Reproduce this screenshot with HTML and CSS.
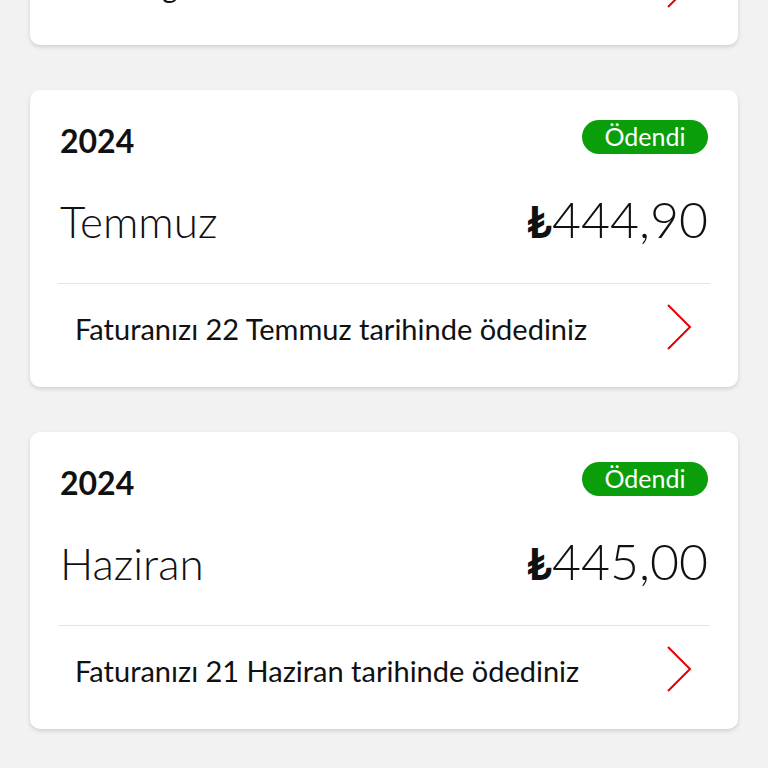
FILE: index.html
```html
<!DOCTYPE html>
<html lang="tr">
<head>
<meta charset="utf-8">
<link rel="stylesheet" href="styles.css">
</head>
<body>
<div class="list">
  <div class="card">
    <div class="head">
      <span class="year">2024</span>
      <span class="badge badge-wait">Ödenmedi</span>
    </div>
    <div class="main">
      <span class="month">Ağustos</span>
      <span class="amount"><span class="cur">₺</span>445,00</span>
    </div>
    <div class="foot">
      <span class="note">Fatura gecikmede</span>
      <svg class="chev" viewBox="0 0 26 46" width="26" height="46"><path d="M2 1 L24 23 L2 45" fill="none" stroke="#e60000" stroke-width="2"/></svg>
    </div>
  </div>
  <div class="card">
    <div class="head">
      <span class="year">2024</span>
      <span class="badge">Ödendi</span>
    </div>
    <div class="main">
      <span class="month">Temmuz</span>
      <span class="amount"><span class="cur">₺</span>444,90</span>
    </div>
    <div class="foot">
      <span class="note">Faturanızı 22 Temmuz tarihinde ödediniz</span>
      <svg class="chev" viewBox="0 0 26 46" width="26" height="46"><path d="M2 1 L24 23 L2 45" fill="none" stroke="#e60000" stroke-width="2"/></svg>
    </div>
  </div>
  <div class="card">
    <div class="head">
      <span class="year">2024</span>
      <span class="badge">Ödendi</span>
    </div>
    <div class="main">
      <span class="month">Haziran</span>
      <span class="amount"><span class="cur">₺</span>445,00</span>
    </div>
    <div class="foot">
      <span class="note">Faturanızı 21 Haziran tarihinde ödediniz</span>
      <svg class="chev" viewBox="0 0 26 46" width="26" height="46"><path d="M2 1 L24 23 L2 45" fill="none" stroke="#e60000" stroke-width="2"/></svg>
    </div>
  </div>
</div>
</body>
</html>
```
FILE: styles.css
```css
html, body {
  margin: 0;
  padding: 0;
  background: #f2f2f2;
  font-family: Lato, "Noto Sans", sans-serif;
  color: #111;
  overflow: hidden;
  height: 768px;
}
.list {
  display: flex;
  flex-direction: column;
  gap: 45px;
  padding: 0 30px;
  margin-top: -252px;
}
.card {
  background: #fff;
  border-radius: 10px;
  box-shadow: 0 2px 4px rgba(0,0,0,0.14);
  height: 297px;
  padding: 0 28px;
  display: flex;
  flex-direction: column;
  box-sizing: border-box;
}
.head {
  display: flex;
  justify-content: space-between;
  align-items: center;
  padding: 30px 2px 0;
  height: 34px;
}
.year {
  font-size: 32px;
  font-weight: 700;
  line-height: 34px;
  margin-top: 8px;
}
.badge {
  background: #0a9f0a;
  color: #fff;
  border-radius: 17px;
  height: 34px;
  width: 126px;
  box-sizing: border-box;
  text-align: center;
  font-size: 25px;
  line-height: 32px;
}
.badge-wait { background: #e60000; }
.main {
  display: flex;
  justify-content: space-between;
  align-items: baseline;
  padding: 37px 2px 0 2px;
  height: 92px;
  border-bottom: 1px solid #e4e4e4;
}
.month {
  font-size: 44px;
  font-weight: 300;
  line-height: 56px;
}
.amount {
  font-size: 50px;
  font-weight: 300;
  line-height: 56px;
}
.cur {
  font-weight: 700;
  font-size: 44px;
}
.foot {
  flex: 1;
  display: flex;
  justify-content: space-between;
  align-items: center;
  padding: 0 18px 18px 17px;
}
.note {
  font-size: 29px;
  font-weight: 400;
  margin-top: 4px;
}
.chev {
  display: block;
}
```
